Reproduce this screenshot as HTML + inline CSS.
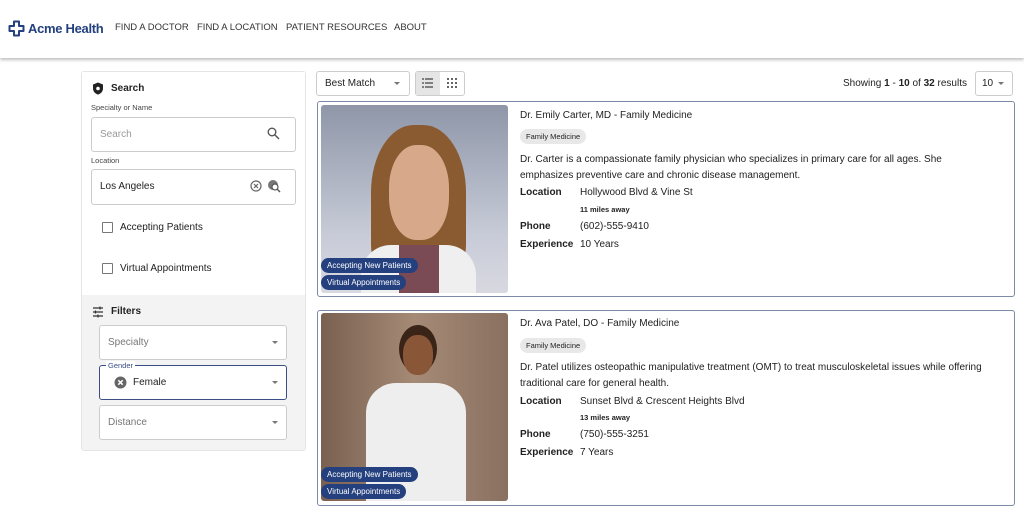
<!DOCTYPE html><html><head><style>
*{box-sizing:border-box;margin:0;padding:0}
body{width:1024px;height:513px;overflow:hidden;background:#fff;font-family:"Liberation Sans",sans-serif;color:#222;position:relative}
.a{position:absolute}
.hdr{left:0;top:0;width:1024px;height:58px;background:#fff;box-shadow:0 2px 3px rgba(0,0,0,.25)}
.nav{font-size:9.5px;color:#333;top:22px}
.box{border:1px solid #ccc;border-radius:3px;background:#fff}
.lbl{font-size:7.5px;color:#444}
.cb{width:11px;height:11px;border:1.5px solid #777;border-radius:1px}
.t10{font-size:10px}
.card{left:317px;width:698px;border:1.5px solid #7f8aa8;border-radius:3px;background:#fff}
.pill{background:#24407e;color:#fff;font-size:8px;border-radius:8px;padding:3px 6px;left:321px}
.tag{background:#e8e8e8;font-size:7.5px;border-radius:8px;padding:3px 6px;left:520px}
.b{font-weight:bold}
</style></head><body>
<div class="a hdr"></div>
<svg class="a" style="left:8px;top:20px" width="17" height="17" viewBox="0 0 17 17"><path d="M6 1.5h5v4.5h4.5v5H11v4.5H6V11H1.5V6H6z" fill="none" stroke="#24407e" stroke-width="2" stroke-linejoin="round"/></svg>
<div class="a b" style="left:28px;top:21px;font-size:13px;color:#24407e;letter-spacing:-.3px">Acme Health</div>
<div class="a nav" style="left:115px">FIND A DOCTOR</div>
<div class="a nav" style="left:197px">FIND A LOCATION</div>
<div class="a nav" style="left:286px">PATIENT RESOURCES</div>
<div class="a nav" style="left:394px">ABOUT</div>

<div class="a" style="left:81px;top:71px;width:225px;height:380px;border:1px solid #e5e5e5;border-radius:3px;background:#f3f3f3"></div>
<div class="a" style="left:82px;top:72px;width:223px;height:223px;background:#fff"></div>
<svg class="a" style="left:92px;top:82px" width="12" height="13" viewBox="0 0 12 13"><path d="M6 0.5L11 2.5v4c0 3-2.5 5.5-5 6-2.5-.5-5-3-5-6v-4z" fill="#222"/><circle cx="6" cy="6.5" r="1.8" fill="#fff"/></svg>
<div class="a b" style="left:111px;top:83px;font-size:10px">Search</div>
<div class="a lbl" style="left:91px;top:103px">Specialty or Name</div>
<div class="a box" style="left:91px;top:117px;width:205px;height:35px"></div>
<div class="a t10" style="left:100px;top:129px;color:#999">Search</div>
<svg class="a" style="left:267px;top:127px" width="13" height="13" viewBox="0 0 13 13"><circle cx="5" cy="5" r="3.8" fill="none" stroke="#555" stroke-width="1.4"/><path d="M8 8l4 4" stroke="#555" stroke-width="1.5"/></svg>
<div class="a lbl" style="left:91px;top:156px">Location</div>
<div class="a box" style="left:91px;top:169px;width:205px;height:36px"></div>
<div class="a t10" style="left:100px;top:181px">Los Angeles</div>
<svg class="a" style="left:250px;top:180px" width="12" height="12" viewBox="0 0 12 12"><circle cx="6" cy="6" r="5" fill="none" stroke="#666" stroke-width="1.2"/><path d="M4 4l4 4M8 4l-4 4" stroke="#666" stroke-width="1.2"/></svg>
<svg class="a" style="left:267px;top:179px" width="14" height="14" viewBox="0 0 14 14"><circle cx="6" cy="6" r="5" fill="#777"/><circle cx="8" cy="8" r="3" fill="#fff" stroke="#555" stroke-width="1.2"/><path d="M10 10l3 3" stroke="#555" stroke-width="1.4"/></svg>
<div class="a cb" style="left:102px;top:222px"></div>
<div class="a t10" style="left:120px;top:222px">Accepting Patients</div>
<div class="a cb" style="left:102px;top:263px"></div>
<div class="a t10" style="left:120px;top:263px">Virtual Appointments</div>
<svg class="a" style="left:92px;top:306px" width="12" height="12" viewBox="0 0 12 12" stroke="#333" stroke-width="1.2"><path d="M1 2h10M1 6h10M1 10h10"/><path d="M8 0.5v3M3.5 4.5v3M6 8.5v3"/></svg>
<div class="a b" style="left:111px;top:306px;font-size:10px">Filters</div>
<div class="a box" style="left:99px;top:325px;width:188px;height:35px"></div>
<div class="a t10" style="left:108px;top:337px;color:#777">Specialty</div>
<div class="a" style="left:272px;top:341px;border:3px solid transparent;border-top:3.5px solid #777"></div>
<div class="a" style="left:99px;top:365px;width:188px;height:35px;border:1.5px solid #3b4f86;border-radius:3px;background:#fff"></div>
<div class="a" style="left:106px;top:361px;background:#fff;padding:0 2px;font-size:7.5px;color:#3b4f86">Gender</div>
<svg class="a" style="left:114px;top:376px" width="13" height="13" viewBox="0 0 13 13"><circle cx="6.5" cy="6.5" r="6" fill="#666"/><path d="M4.3 4.3l4.4 4.4M8.7 4.3l-4.4 4.4" stroke="#fff" stroke-width="1.5"/></svg>
<div class="a t10" style="left:133px;top:377px">Female</div>
<div class="a" style="left:272px;top:381px;border:3px solid transparent;border-top:3.5px solid #777"></div>
<div class="a box" style="left:99px;top:405px;width:188px;height:35px"></div>
<div class="a t10" style="left:108px;top:417px;color:#777">Distance</div>
<div class="a" style="left:272px;top:421px;border:3px solid transparent;border-top:3.5px solid #777"></div>

<div class="a box" style="left:316px;top:71px;width:94px;height:25px"></div>
<div class="a t10" style="left:325px;top:78px">Best Match</div>
<div class="a" style="left:394px;top:82px;border:3px solid transparent;border-top:3.5px solid #777"></div>
<div class="a box" style="left:415px;top:71px;width:50px;height:25px"></div>
<div class="a" style="left:416px;top:72px;width:24px;height:23px;background:#e5e5e5"></div>
<svg class="a" style="left:422px;top:78px" width="11" height="10" viewBox="0 0 11 10" stroke="#444" stroke-width="1.2"><path d="M0 1h2M3 1h8M0 5h2M3 5h8M0 9h2M3 9h8"/></svg>
<svg class="a" style="left:447px;top:78px" width="10" height="10" viewBox="0 0 10 10" fill="#666"><rect x="0" y="0" width="2" height="2"/><rect x="4" y="0" width="2" height="2"/><rect x="8" y="0" width="2" height="2"/><rect x="0" y="4" width="2" height="2"/><rect x="4" y="4" width="2" height="2"/><rect x="8" y="4" width="2" height="2"/><rect x="0" y="8" width="2" height="2"/><rect x="4" y="8" width="2" height="2"/><rect x="8" y="8" width="2" height="2"/></svg>
<div class="a t10" style="left:843px;top:78px">Showing <b>1</b> - <b>10</b> of <b>32</b> results</div>
<div class="a box" style="left:975px;top:71px;width:38px;height:25px"></div>
<div class="a t10" style="left:982px;top:78px">10</div>
<div class="a" style="left:998px;top:82px;border:3px solid transparent;border-top:3.5px solid #777"></div>

<div class="a card" style="top:101px;height:196px"></div>
<div class="a" style="left:321px;top:105px;width:187px;height:188px;border-radius:3px;overflow:hidden;background:linear-gradient(180deg,#8e96a8,#c8ccd8 70%,#d8d8e0)">
<div class="a" style="left:50px;top:20px;width:95px;height:150px;background:#8a5a30;border-radius:45% 45% 20% 20%"></div>
<div class="a" style="left:68px;top:40px;width:60px;height:95px;background:#d8a88a;border-radius:45%"></div>
<div class="a" style="left:40px;top:140px;width:115px;height:60px;background:#efefef;border-radius:30px 30px 0 0"></div>
<div class="a" style="left:78px;top:140px;width:40px;height:50px;background:#7a4a55"></div></div>
<div class="a pill" style="top:258px">Accepting New Patients</div>
<div class="a pill" style="top:275px">Virtual Appointments</div>
<div class="a t10" style="left:520px;top:110px">Dr. Emily Carter, MD - Family Medicine</div>
<div class="a tag" style="top:129px">Family Medicine</div>
<div class="a t10" style="left:520px;top:152px;line-height:16px;width:460px">Dr. Carter is a compassionate family physician who specializes in primary care for all ages. She emphasizes preventive care and chronic disease management.</div>
<div class="a t10 b" style="left:520px;top:187px">Location</div><div class="a t10" style="left:580px;top:187px">Hollywood Blvd &amp; Vine St</div>
<div class="a b" style="left:580px;top:205px;font-size:7.5px">11 miles away</div>
<div class="a t10 b" style="left:520px;top:221px">Phone</div><div class="a t10" style="left:580px;top:221px">(602)-555-9410</div>
<div class="a t10 b" style="left:520px;top:239px">Experience</div><div class="a t10" style="left:580px;top:239px">10 Years</div>

<div class="a card" style="top:310px;height:196px"></div>
<div class="a" style="left:321px;top:313px;width:187px;height:188px;border-radius:3px;overflow:hidden;background:linear-gradient(90deg,#7a6050,#a58a76 50%,#8a7060)">
<div class="a" style="left:78px;top:12px;width:38px;height:48px;background:#3a2418;border-radius:50%"></div>
<div class="a" style="left:82px;top:22px;width:30px;height:40px;background:#8a5638;border-radius:45%"></div>
<div class="a" style="left:45px;top:70px;width:100px;height:118px;background:#eeeeee;border-radius:30px 30px 0 0"></div></div>
<div class="a pill" style="top:467px">Accepting New Patients</div>
<div class="a pill" style="top:484px">Virtual Appointments</div>
<div class="a t10" style="left:520px;top:318px">Dr. Ava Patel, DO - Family Medicine</div>
<div class="a tag" style="top:338px">Family Medicine</div>
<div class="a t10" style="left:520px;top:360px;line-height:16px;width:480px">Dr. Patel utilizes osteopathic manipulative treatment (OMT) to treat musculoskeletal issues while offering traditional care for general health.</div>
<div class="a t10 b" style="left:520px;top:396px">Location</div><div class="a t10" style="left:580px;top:396px">Sunset Blvd &amp; Crescent Heights Blvd</div>
<div class="a b" style="left:580px;top:413px;font-size:7.5px">13 miles away</div>
<div class="a t10 b" style="left:520px;top:429px">Phone</div><div class="a t10" style="left:580px;top:429px">(750)-555-3251</div>
<div class="a t10 b" style="left:520px;top:447px">Experience</div><div class="a t10" style="left:580px;top:447px">7 Years</div>
</body></html>
